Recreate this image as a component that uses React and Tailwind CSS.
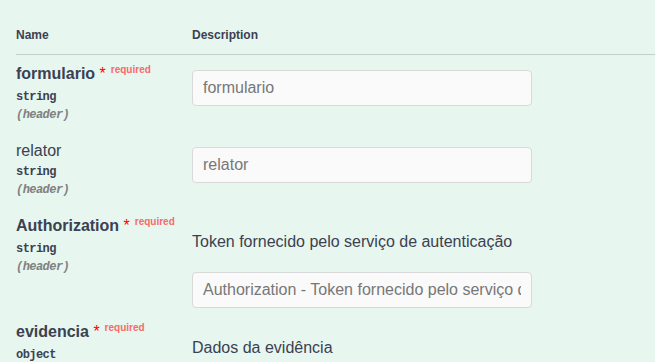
const params = [
  { name: "formulario", required: true, type: "string", placeholder: "formulario" },
  { name: "relator", required: false, type: "string", placeholder: "relator" },
  {
    name: "Authorization",
    required: true,
    type: "string",
    description: "Token fornecido pelo serviço de autenticação",
    placeholder: "Authorization - Token fornecido pelo serviço de autenticação",
  },
  { name: "evidencia", required: true, type: "object", description: "Dados da evidência" },
];

function ParamRow({ param }) {
  return (
    <tr className="align-top">
      <td className="w-[176px] py-[10px]">
        <div className={"text-[16px] leading-[18px] " + (param.required ? "font-bold" : "font-normal")}>
          {param.name}
          {param.required && (
            <>
              <span className="text-[#ff0000] font-normal">&nbsp;*</span>
              <span className="relative top-[-6px] pl-[5px] text-[10px] font-bold text-[#f56b6b]">required</span>
            </>
          )}
        </div>
        <div className="pt-[5px] pb-[4px] font-['Liberation_Mono',monospace] text-[12px] leading-[14px] font-bold tracking-[-0.55px]">
          {param.type}
        </div>
        <div className="font-['Liberation_Mono',monospace] text-[12px] leading-[14px] font-bold italic tracking-[-0.55px] text-[#808080]">
          (header)
        </div>
      </td>
      <td className="pt-[10px]">
        {param.description && (
          <p className="mt-[16px] mb-[21px] text-[16px] leading-[18px]">{param.description}</p>
        )}
        {param.placeholder && (
          <input
            type="text"
            placeholder={param.placeholder}
            className="my-[5px] block h-[36px] w-[340px] rounded-[4px] border border-[#d9d9d9] bg-[#fafafa] px-[10px] text-[16px] outline-none placeholder:text-[#777777]"
          />
        )}
      </td>
    </tr>
  );
}

export default function App() {
  return (
    <div className="h-[362px] w-[655px] overflow-hidden bg-[#e7f6ef] pl-[16px] pt-[16px] font-['Liberation_Sans',Arial,sans-serif] text-[#3b4151]">
      <table className="w-full border-collapse">
        <thead>
          <tr className="border-b border-[#c3d0cb]">
            <th className="py-[12px] text-left text-[12px] leading-[14px] font-bold">Name</th>
            <th className="py-[12px] text-left text-[12px] leading-[14px] font-bold">Description</th>
          </tr>
        </thead>
        <tbody>
          {params.map((p) => (
            <ParamRow key={p.name} param={p} />
          ))}
        </tbody>
      </table>
    </div>
  );
}
